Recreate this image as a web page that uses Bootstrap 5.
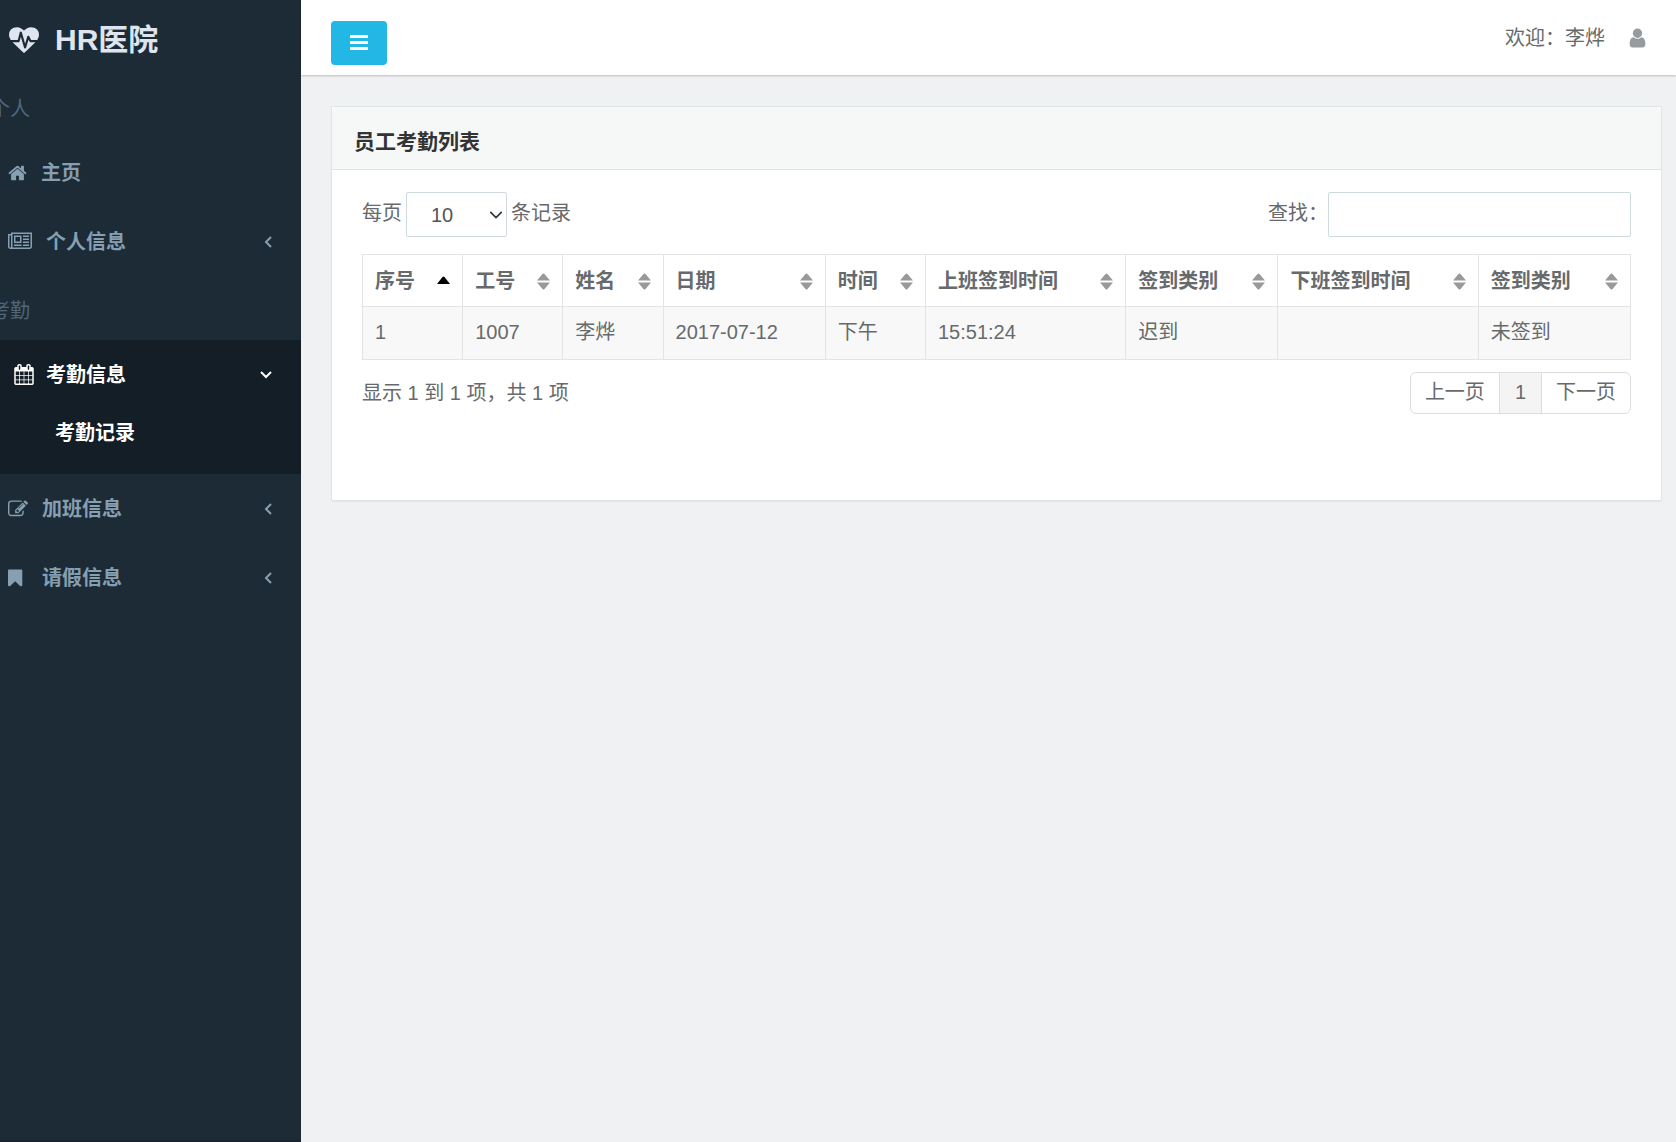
<!DOCTYPE html>
<html lang="zh-CN">
<head>
<meta charset="utf-8">
<meta name="viewport" content="width=device-width, initial-scale=1">
<title>HR医院</title>
<link href="https://cdn.jsdelivr.net/npm/bootstrap@5.3.0/dist/css/bootstrap.min.css" rel="stylesheet">
<style>
body { font-family: "Liberation Sans", "Noto Sans CJK SC", sans-serif; font-size: 20px; line-height: 28px; color: #676a6c; background: #eff1f3; }
svg { fill: currentColor; display: block; flex-shrink: 0; }
.sidebar { width: 301px; background: #1c2b36; color: #869fb1; border-bottom: 2px solid #1b2230; overflow: hidden; }
.brand-link { height: 74px; padding: 6px 0 0 9px; gap: 16px; color: #dee5ef; font-size: 30px; font-weight: 700; }
.side-heading { height: 64px; margin-left: -10px; padding-top: 21px; color: #506779; }
.side-link { height: 69px; padding: 0 29px 0 8px; gap: 14px; color: #869fb1; font-weight: 700; }
.side-link:hover, .sub-link:hover { color: #fff; }
.side-group { background: #131e26; padding-bottom: 17px; }
.side-group .side-link { padding-left: 14px; gap: 12px; color: #fff; }
.sub-link { height: 48px; padding-left: 55px; color: #fff; font-weight: 700; }
.chevron { fill: none; stroke: currentColor; stroke-width: 2; }
.topbar { height: 75px; padding: 0 30px; background: #fff; box-shadow: 0 1px 2px rgba(0,0,0,.22); }
.btn-menu { width: 56px; height: 44px; margin-top: 10px; background: #23b7e5; color: #fff; border-radius: 4px; }
.btn-menu:hover { background: #19a9d5; color: #fff; }
.user-link { color: #676a6c; gap: 24px; }
.user-link svg { color: #989b9e; }
.page-body { padding: 31px 14px 30px 30px; }
.panel { border: 1px solid #dee5e7; border-radius: 2px; box-shadow: 0 1px 1px rgba(0,0,0,.05); }
.panel-title { padding: 7px 22px 0; height: 63px; background: #f6f8f8; border-color: #dee5e7; color: #333; font-size: 21px; font-weight: 700; }
.panel-content { padding: 22px 30px 86px; }
.field { height: 45px; border: 1px solid #cfdadd; border-radius: 2px; font-size: 20px; color: #555; box-shadow: none; }
.page-size { width: 101px; padding: 0 24px; background-size: 18px 14px; background-position: right 1px center; }
.search-box { width: 303px; }
.filters { margin-bottom: 17px; }
.filters label { padding-bottom: 3px; }
.records { table-layout: fixed; margin-bottom: 12px; color: #676a6c; border-color: #e4e4e4; --bs-table-striped-bg: #f8f8f8; --bs-table-striped-color: #676a6c; --bs-table-color: #676a6c; }
.records th { padding: 12px 12px 11px; }
.records td { padding: 11px 12px 13px; }
.records thead th { border-bottom-color: #d5d5d5; }
.w-s { width: 7.9%; } .w-m { width: 12%; } .w-d { width: 12.8%; } .w-l { width: 15.8%; }
.sort-btn { border: 0; padding: 0; background: none; color: inherit; font-weight: 700; }
.sort-btn svg { color: #999; }
.sort-btn svg.sorted { color: #000; }
.pagination { --bs-pagination-border-color: #ddd; }
.pagination .page-link { height: 42px; padding: 5px 14px; font-size: 20px; color: #676a6c; box-shadow: none; }
.pagination .active .page-link { padding: 5px 15px; background: #f4f4f4; border-color: #ddd; }
</style>
<script src="https://cdn.jsdelivr.net/npm/bootstrap@5.3.0/dist/js/bootstrap.bundle.min.js"></script>
</head>
<body>
<svg width="0" height="0" class="d-none" aria-hidden="true">
  <symbol id="sort-both" viewBox="0 0 13 17"><path d="M0 7.500 5.500 1Q6.500 0 7.500 1L13 7.500zM0 9.500h13L7.500 16Q6.500 17 5.500 16z"/></symbol>
  <symbol id="angle-left" viewBox="0 0 8 12"><path d="M7 1 2 6l5 5"/></symbol>
</svg>
<div class="d-flex min-vh-100">
  <aside class="sidebar flex-shrink-0">
    <a class="brand-link d-flex align-items-center text-decoration-none" href="#">
      <svg width="30" height="30" viewBox="0 0 1792 1792"><path d="M1280 1024h305q-5 6-10 10.500t-9 7.500l-3 4-623 600q-18 18-44 18t-44-18l-624-602q-5-2-21-20h369q22 0 39.500-13.500t22.500-34.500l70-281 190 667q6 20 23 33t39 13q21 0 38-13t23-33l146-485 56 112q18 35 57 35zm512-428q0 145-103 300h-369l-111-221q-8-17-25.500-27t-36.500-8q-45 5-56 46l-129 430-196-686q-6-20-23.500-33t-39.500-13-39 13.500-22 34.500l-116 464h-423q-103-155-103-300 0-220 127-344t351-124q62 0 126.500 21.500t120 58 95.500 68.500 76 68q36-36 76-68t95.500-68.500 120-58 126.500-21.500q224 0 351 124t127 344z"/></svg>
      <span>HR医院</span>
    </a>
    <nav>
      <div class="side-heading">个人</div>
      <a class="side-link d-flex align-items-center text-decoration-none" href="#">
        <svg width="19" height="20" viewBox="64 0 1664 1792"><path d="M1472 992v480q0 26-19 45t-45 19h-384v-384h-256v384h-384q-26 0-45-19t-19-45v-480q0-1 .5-3t.5-3l575-474 575 474q1 2 1 6zm223-69l-62 74q-8 9-21 11h-3q-13 0-21-7l-692-577-692 577q-12 8-24 7-13-2-21-11l-62-74q-8-10-7-23.500t11-21.500l719-599q32-26 76-26t76 26l244 204v-195q0-14 9-23t23-9h192q14 0 23 9t9 23v408l219 182q10 8 11 21.500t-7 23.500z"/></svg>
        <span>主页</span>
      </a>
      <a class="side-link d-flex align-items-center text-decoration-none" href="#">
        <svg width="24" height="21" viewBox="0 0 2048 1792"><path d="M1024 512h-384v384h384v-384zm128 640v128h-640v-128h640zm0-768v640h-640v-640h640zm640 768v128h-512v-128h512zm0-256v128h-512v-128h512zm0-256v128h-512v-128h512zm0-256v128h-512v-128h512zm-1536 960v-960h-128v960q0 26 19 45t45 19 45-19 19-45zm1664 0v-1088h-1536v1088q0 33-11 64h1483q26 0 45-19t19-45zm128-1216v1216q0 80-56 136t-136 56h-1664q-80 0-136-56t-56-136v-1088h256v-128h1792z"/></svg>
        <span>个人信息</span>
        <svg class="chevron ms-auto" width="8" height="12"><use href="#angle-left"/></svg>
      </a>
      <div class="side-heading">考勤</div>
      <div class="side-group">
        <a class="side-link d-flex align-items-center text-decoration-none" href="#">
          <svg width="20" height="21" viewBox="64 0 1664 1792"><path d="M192 1664h288v-288h-288v288zm352 0h320v-288h-320v288zm-352-352h288v-320h-288v320zm352 0h320v-320h-320v320zm-352-384h288v-288h-288v288zm736 736h320v-288h-320v288zm-384-736h320v-288h-320v288zm768 736h288v-288h-288v288zm-384-352h320v-320h-320v320zm-352-864v-288q0-13-9.500-22.500t-22.500-9.500h-64q-13 0-22.500 9.500t-9.500 22.500v288q0 13 9.500 22.500t22.500 9.500h64q13 0 22.500-9.500t9.500-22.500zm736 864h288v-320h-288v320zm-384-384h320v-288h-320v288zm384 0h288v-288h-288v288zm32-480v-288q0-13-9.500-22.500t-22.500-9.500h-64q-13 0-22.500 9.500t-9.500 22.500v288q0 13 9.500 22.500t22.500 9.500h64q13 0 22.500-9.500t9.500-22.500zm384-64v1280q0 52-38 90t-90 38h-1408q-52 0-90-38t-38-90v-1280q0-52 38-90t90-38h128v-96q0-66 47-113t113-47h64q66 0 113 47t47 113v96h384v-96q0-66 47-113t113-47h64q66 0 113 47t47 113v96h128q52 0 90 38t38 90z"/></svg>
          <span>考勤信息</span>
          <svg class="chevron ms-auto" width="12" height="8" viewBox="0 0 12 8"><path d="M1 1l5 5 5-5"/></svg>
        </a>
        <a class="sub-link d-flex align-items-center text-decoration-none" href="#">考勤记录</a>
      </div>
      <a class="side-link d-flex align-items-center text-decoration-none" href="#">
        <svg width="20" height="20" viewBox="0 0 1792 1792"><path d="M888 1184l116-116-152-152-116 116v56h96v96h56zm440-720q-16-16-33 1l-350 350q-17 17-1 33t33-1l350-350q17-17 1-33zm80 594v190q0 119-84.500 203.500t-203.500 84.500h-832q-119 0-203.500-84.500t-84.500-203.500v-832q0-119 84.500-203.500t203.500-84.500h832q63 0 117 25 15 7 18 23 3 17-9 29l-49 49q-14 14-32 8-23-6-45-6h-832q-66 0-113 47t-47 113v832q0 66 47 113t113 47h832q66 0 113-47t47-113v-126q0-13 9-22l64-64q15-15 35-7t20 29zm-96-738l288 288-672 672h-288v-288zm444 132l-92 92-288-288 92-92q28-28 68-28t68 28l152 152q28 28 28 68t-28 68z"/></svg>
        <span>加班信息</span>
        <svg class="chevron ms-auto" width="8" height="12"><use href="#angle-left"/></svg>
      </a>
      <a class="side-link d-flex align-items-center text-decoration-none" href="#">
        <svg width="20" height="20" viewBox="256 0 1792 1792"><path d="M1420 128q23 0 44 9 33 13 52.500 41t19.500 62v1289q0 34-19.500 62t-52.500 41q-19 8-44 8-48 0-83-32l-441-424-441 424q-36 33-83 33-23 0-44-9-33-13-52.500-41t-19.500-62v-1289q0-34 19.500-62t52.500-41q21-9 44-9h1048z"/></svg>
        <span>请假信息</span>
        <svg class="chevron ms-auto" width="8" height="12"><use href="#angle-left"/></svg>
      </a>
    </nav>
  </aside>

  <div class="flex-grow-1">
    <header class="topbar d-flex align-items-center justify-content-between">
      <button class="btn btn-menu border-0 p-0 d-flex align-items-center justify-content-center" type="button" aria-label="菜单">
        <svg width="18" height="16" viewBox="0 0 18 16"><path d="M0 0h18v3H0zM0 6h18v3H0zM0 12h18v3H0z"/></svg>
      </button>
      <a class="user-link d-flex align-items-center text-decoration-none" href="#">
        <span>欢迎：李烨</span>
        <svg width="17" height="22" viewBox="256 0 1280 1792"><path d="M1536 1399q0 109-62.500 187t-150.500 78h-854q-88 0-150.500-78t-62.500-187q0-85 8.500-160.500t31.500-152 58.500-131 94-89 134.500-34.500q131 128 313 128t313-128q76 0 134.500 34.500t94 89 58.500 131 31.500 152 8.500 160.500zm-256-887q0 159-112.500 271.500t-271.500 112.500-271.500-112.500-112.500-271.500 112.500-271.500 271.500-112.500 271.500 112.500 112.500 271.500z"/></svg>
      </a>
    </header>

    <main class="page-body">
      <section class="card panel">
        <h1 class="card-header panel-title d-flex align-items-center m-0">员工考勤列表</h1>
        <div class="card-body panel-content">
          <div class="filters d-flex align-items-center justify-content-between">
            <div class="d-flex align-items-center gap-1">
              <label for="pageSize">每页</label>
              <select id="pageSize" class="form-select field page-size"><option>10</option><option>25</option><option>50</option><option>100</option></select>
              <label for="pageSize">条记录</label>
            </div>
            <div class="d-flex align-items-center">
              <label for="search">查找：</label>
              <input id="search" type="search" class="form-control field search-box">
            </div>
          </div>

          <table class="table table-bordered table-striped records">
            <colgroup><col class="w-s"><col class="w-s"><col class="w-s"><col class="w-d"><col class="w-s"><col class="w-l"><col class="w-m"><col class="w-l"><col class="w-m"></colgroup>
            <thead>
              <tr>
                <th scope="col" aria-sort="ascending"><button class="sort-btn w-100 d-flex align-items-center justify-content-between" type="button">序号<svg class="sorted" width="13" height="17" viewBox="0 0 13 17"><path d="M0 11 5.500 4Q6.500 3 7.500 4L13 11z"/></svg></button></th>
                <th scope="col"><button class="sort-btn w-100 d-flex align-items-center justify-content-between" type="button">工号<svg width="13" height="17"><use href="#sort-both"/></svg></button></th>
                <th scope="col"><button class="sort-btn w-100 d-flex align-items-center justify-content-between" type="button">姓名<svg width="13" height="17"><use href="#sort-both"/></svg></button></th>
                <th scope="col"><button class="sort-btn w-100 d-flex align-items-center justify-content-between" type="button">日期<svg width="13" height="17"><use href="#sort-both"/></svg></button></th>
                <th scope="col"><button class="sort-btn w-100 d-flex align-items-center justify-content-between" type="button">时间<svg width="13" height="17"><use href="#sort-both"/></svg></button></th>
                <th scope="col"><button class="sort-btn w-100 d-flex align-items-center justify-content-between" type="button">上班签到时间<svg width="13" height="17"><use href="#sort-both"/></svg></button></th>
                <th scope="col"><button class="sort-btn w-100 d-flex align-items-center justify-content-between" type="button">签到类别<svg width="13" height="17"><use href="#sort-both"/></svg></button></th>
                <th scope="col"><button class="sort-btn w-100 d-flex align-items-center justify-content-between" type="button">下班签到时间<svg width="13" height="17"><use href="#sort-both"/></svg></button></th>
                <th scope="col"><button class="sort-btn w-100 d-flex align-items-center justify-content-between" type="button">签到类别<svg width="13" height="17"><use href="#sort-both"/></svg></button></th>
              </tr>
            </thead>
            <tbody>
              <tr><td>1</td><td>1007</td><td>李烨</td><td>2017-07-12</td><td>下午</td><td>15:51:24</td><td>迟到</td><td></td><td>未签到</td></tr>
            </tbody>
          </table>

          <div class="d-flex align-items-center justify-content-between">
            <div>显示 1 到 1 项，共 1 项</div>
            <nav aria-label="分页">
              <ul class="pagination m-0">
                <li class="page-item"><a class="page-link" href="#">上一页</a></li>
                <li class="page-item active" aria-current="page"><a class="page-link" href="#">1</a></li>
                <li class="page-item"><a class="page-link" href="#">下一页</a></li>
              </ul>
            </nav>
          </div>
        </div>
      </section>
    </main>
  </div>
</div>
</body>
</html>
